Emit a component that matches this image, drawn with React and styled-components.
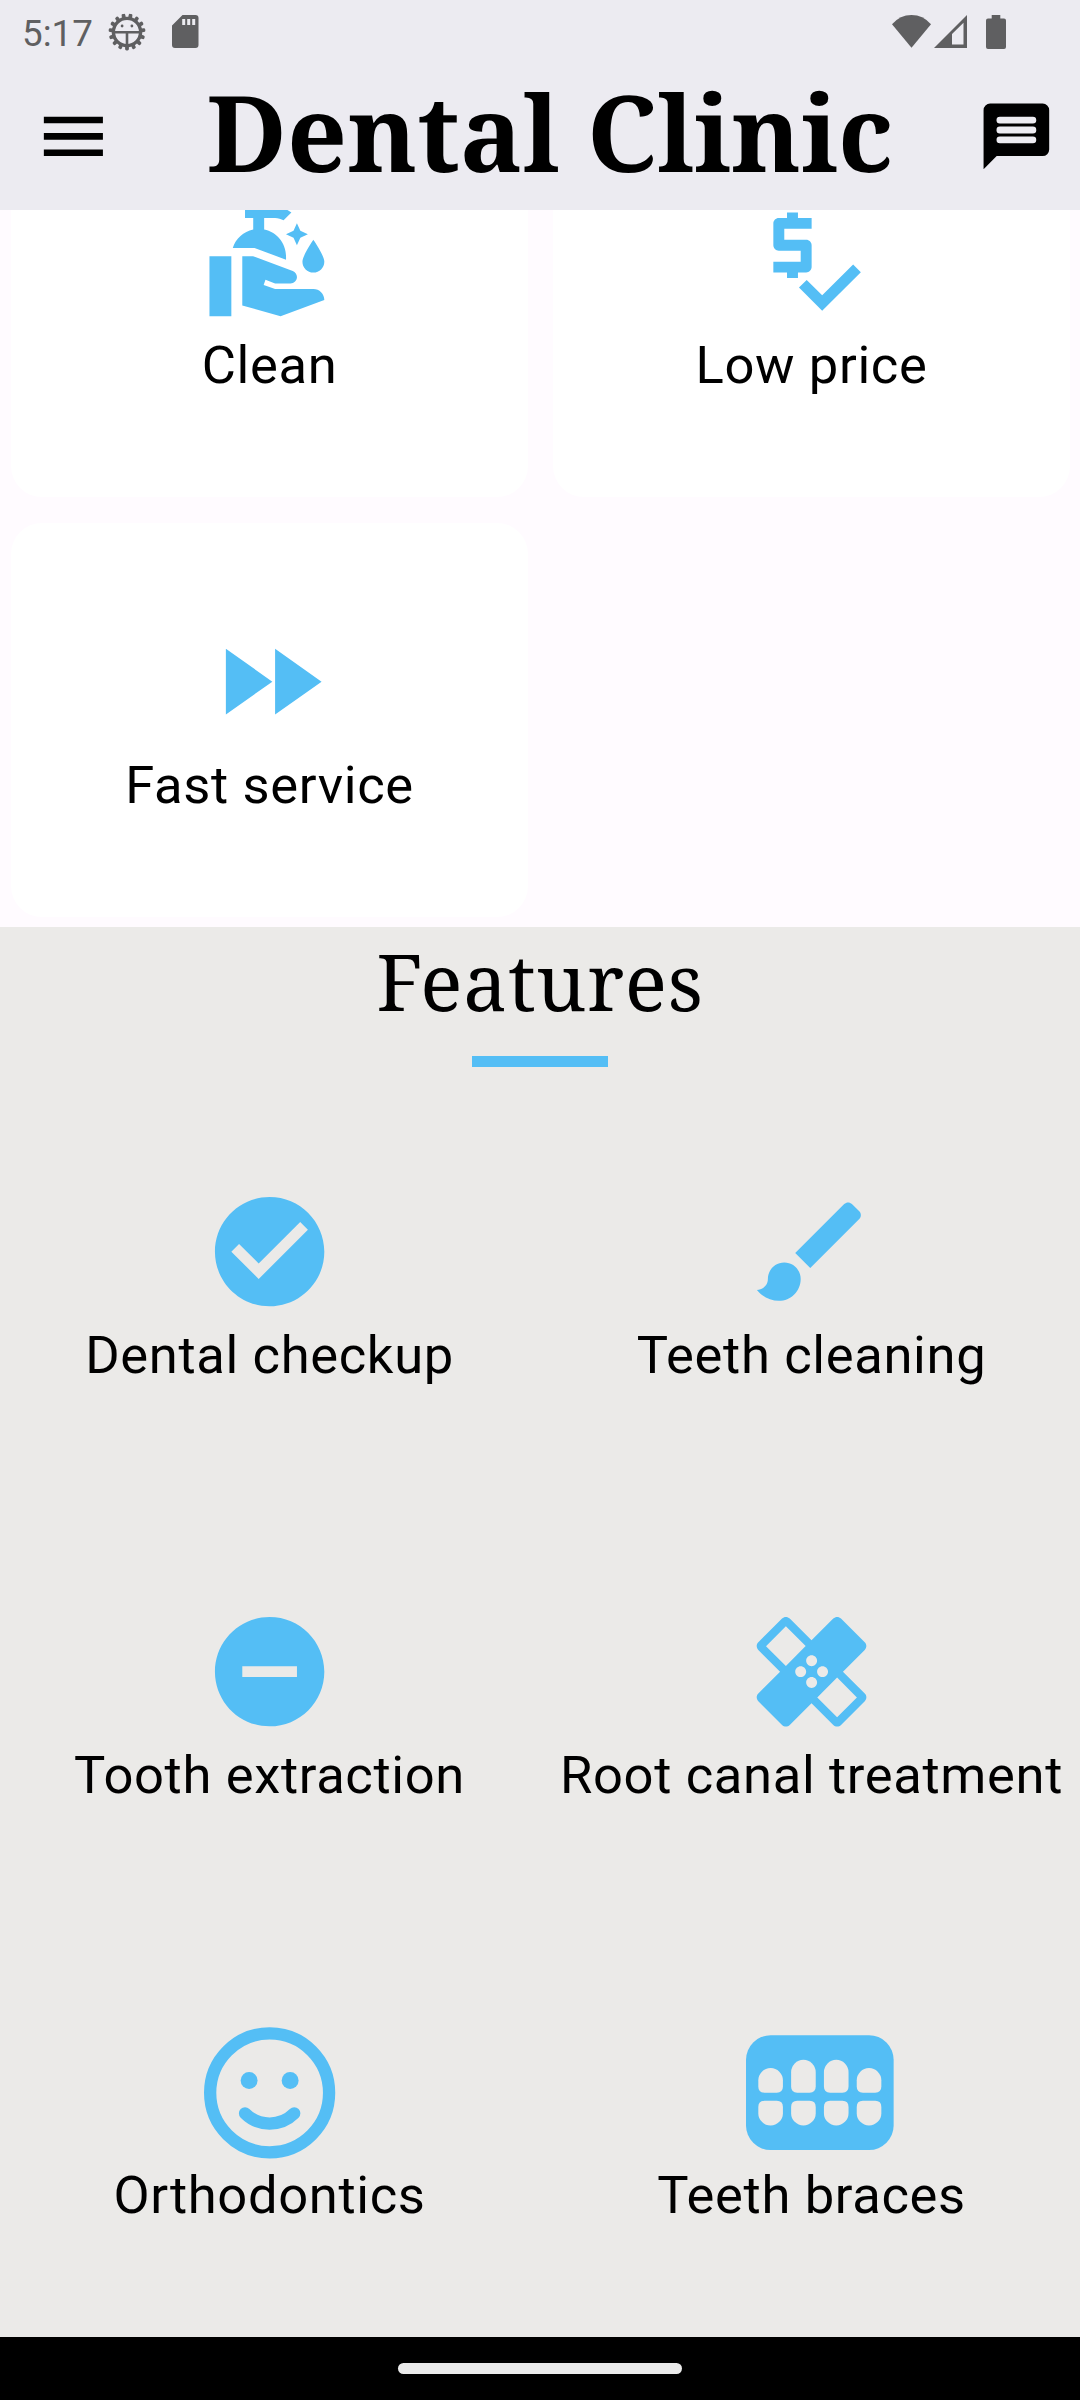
import React from "react";
import styled, { createGlobalStyle } from "styled-components";

const BLUE = "#54bef5";
const STATUS = "#5f5f61";

const GlobalStyle = createGlobalStyle`
  *, *::before, *::after { box-sizing: border-box; }
  body { margin: 0; background: #fffbff; font-family: Roboto, "Noto Sans", sans-serif; color: #000; }
  svg { display: block; flex: none; }
`;

const Screen = styled.div`
  display: flex;
  flex-direction: column;
  width: 1080px;
  height: 2400px;
  overflow: hidden;
  background: #fffbff;
`;

const Header = styled.header`
  flex: none;
  height: 210px;
  background: #ecebf1;
`;

const StatusBar = styled.div`
  display: flex;
  align-items: center;
  height: 63px;
  padding: 0 74px 0 22px;
  color: ${STATUS};
`;

const Clock = styled.span`
  width: 86px;
  font-size: 36.75px;
  line-height: 43px;
  margin-top: 3px;
`;

const StatusIcons = styled.div`
  display: flex;
  align-items: center;
  gap: ${(p) => p.$gap}px;
  margin-left: ${(p) => (p.$end ? "auto" : "0")};
`;

const AppBar = styled.div`
  display: flex;
  align-items: center;
  height: 147px;
  padding: 0 24px 0 34px;
`;

const Title = styled.h1`
  flex: 1;
  margin: 0;
  padding: 0 0 10px 10px;
  text-align: center;
  white-space: nowrap;
  font: 700 105px/137px "Noto Serif", "DejaVu Serif Condensed", "DejaVu Serif", serif;
`;

const Content = styled.main`
  flex: 1;
  min-height: 0;
  overflow: hidden;
`;

const Services = styled.section`
  margin-top: -107.25px;
  padding: 0 10.5px 10.5px;
`;

const Grid = styled.div`
  display: grid;
  grid-template-columns: 1fr 1fr;
  grid-auto-rows: 394px;
  gap: 26px 25px;
`;

const Tile = styled.div`
  display: flex;
  flex-direction: column;
  align-items: center;
  padding: 93px 0 0 1px;
  border-radius: 31px;
  background: ${(p) => (p.$card ? "#fff" : "transparent")};
`;

const IconBox = styled.div`
  display: flex;
  align-items: center;
  width: 131.25px;
  height: 131.25px;
  color: ${BLUE};
`;

const Label = styled.span`
  margin-top: 6.5px;
  font-size: 52.5px;
  line-height: 63px;
  letter-spacing: 0.656px;
  white-space: nowrap;
`;

const Features = styled.section`
  padding: 0 10.5px 40px;
  background: #ebeae8;
`;

const SectionHead = styled.div`
  display: flex;
  flex-direction: column;
  align-items: center;
  height: 165.5px;
`;

const SectionTitle = styled.h2`
  margin: 0;
  font: 400 78.75px/107px "Noto Serif", "DejaVu Serif Condensed", "DejaVu Serif", serif;
  letter-spacing: 0.656px;
`;

const Underline = styled.div`
  width: 135.5px;
  height: 10.5px;
  margin-top: 21.75px;
  background: ${BLUE};
`;

const NavBar = styled.footer`
  display: flex;
  flex: none;
  justify-content: center;
  align-items: center;
  height: 63px;
  background: #000;
`;

const Pill = styled.div`
  width: 284px;
  height: 11px;
  border-radius: 6px;
  background: #ebebeb;
`;

const Glyph = ({ d, size = 131.25 }) => (
  <svg width={size} height={size} viewBox="0 0 24 24" fill="currentColor">
    <path d={d} />
  </svg>
);

const PATHS = {
  menu: "M3 18h18v-2H3v2zm0-5h18v-2H3v2zm0-7v2h18V6H3z",
  clean:
    "M16.99 9l.63-1.37L18.99 7l-1.37-.63L16.99 5l-.62 1.37L14.99 7l1.38.63zM11 6.13V4h2c.57 0 1.1.17 1.55.45l1.43-1.43C15.15 2.39 14.13 2 13 2H7.5v2H9v2.14C7.23 6.51 5.81 7.8 5.26 9.5h3.98L15 11.65v-.62c0-2.42-1.72-4.44-4-4.9zM1 22h4V11H1v11zM20 17h-7l-2.09-.73.33-.94L13 16h2.82c.65 0 1.18-.53 1.18-1.18 0-.49-.31-.93-.77-1.11L8.97 11H7v9.02L14 22l8-3c-.01-1.1-.89-2-2-2zM20 14c1.1 0 2-.9 2-2s-2-4-2-4-2 2.9-2 4 .9 2 2 2z",
  price:
    "M12 13V9c0-.55-.45-1-1-1H7V6h5V4H9.5V3h-2v1H6c-.55 0-1 .45-1 1v4c0 .55.45 1 1 1h4v2H5v2h2.5v1h2v-1H11c.55 0 1-.45 1-1zM19.59 12.52l-5.66 5.65-2.83-2.83-1.41 1.41L13.93 21 21 13.93z",
  fast: "M4 18l8.5-6L4 6v12zm9-12v12l8.5-6L13 6z",
  check:
    "M12 2C6.48 2 2 6.48 2 12s4.48 10 10 10 10-4.48 10-10S17.52 2 12 2zm-2 15l-5-5 1.41-1.41L10 14.17l7.59-7.59L19 8l-9 9z",
  brush:
    "M7 14c-1.66 0-3 1.34-3 3 0 1.31-1.16 2-2 2 .92 1.22 2.49 2 4 2 2.21 0 4-1.79 4-4 0-1.66-1.34-3-3-3zm13.71-9.37l-1.34-1.34c-.39-.39-1.02-.39-1.41 0L9 12.25 11.75 15l8.96-8.96c.39-.39.39-1.02 0-1.41z",
  remove:
    "M12 2C6.48 2 2 6.48 2 12s4.48 10 10 10 10-4.48 10-10S17.52 2 12 2zm5 11H7v-2h10v2z",
  healing:
    "M17.73 12.02l3.98-3.98c.39-.39.39-1.02 0-1.41l-4.34-4.34c-.39-.39-1.02-.39-1.41 0l-3.98 3.98L8 2.29C7.8 2.1 7.55 2 7.29 2c-.25 0-.51.1-.7.29L2.25 6.63c-.39.39-.39 1.02 0 1.41l3.98 3.98L2.25 16c-.39.39-.39 1.02 0 1.41l4.34 4.34c.39.39 1.02.39 1.41 0l3.98-3.98 3.98 3.98c.2.2.45.29.71.29.26 0 .51-.1.71-.29l4.34-4.34c.39-.39.39-1.02 0-1.41l-3.99-3.98zM12 9c.55 0 1 .45 1 1s-.45 1-1 1-1-.45-1-1 .45-1 1-1zm-4.71 1.96L3.66 7.34l3.63-3.63 3.62 3.62-3.62 3.63zM10 13c-.55 0-1-.45-1-1s.45-1 1-1 1 .45 1 1-.45 1-1 1zm2 2c-.55 0-1-.45-1-1s.45-1 1-1 1 .45 1 1-.45 1-1 1zm2-4c.55 0 1 .45 1 1s-.45 1-1 1-1-.45-1-1 .45-1 1-1zm2.66 9.34l-3.63-3.62 3.63-3.63 3.62 3.62-3.62 3.63z",
};

const ChatIcon = () => (
  <svg width="78.75" height="78.75" viewBox="0 0 24 24">
    <path d="M4 2h16a2 2 0 0 1 2 2v12a2 2 0 0 1-2 2H6l-4 4V4a2 2 0 0 1 2-2z" />
    <g fill="#ecebf1">
      <rect x="5.95" y="6" width="12.1" height="2.1" rx="1" />
      <rect x="5.95" y="9" width="12.1" height="2.1" rx="1" />
      <rect x="5.95" y="12" width="12.1" height="2.1" rx="1" />
    </g>
  </svg>
);

const SmileIcon = () => (
  <svg width="131.25" height="131.25" viewBox="0 -0.15 16 16" overflow="visible" fill="none" stroke="currentColor" strokeWidth="1.5" strokeLinecap="round">
    <circle cx="8" cy="8" r="7.25" />
    <path d="M5 10.5a4.25 4.25 0 0 0 6 0" />
    <g fill="currentColor" stroke="none">
      <circle cx="5.5" cy="6.5" r="1.03" />
      <circle cx="10.5" cy="6.5" r="1.03" />
    </g>
  </svg>
);

const UPPER = [[1.5, 4], [5.5, 3], [9.5, 3], [13.5, 4]];

const TeethIcon = () => (
  <svg width="147.66" height="114.84" viewBox="0 -0.15 18 14" overflow="visible" fill="currentColor">
    <rect width="18" height="14" rx="3" />
    <g fill="#ebeae8">
      {UPPER.map(([x, y]) => (
        <React.Fragment key={x}>
          <path d={`M${x} ${y + 1.5}a1.5 1.5 0 0 1 3 0V6.25q0 .75-.75.75h-1.5q-.75 0-.75-.75z`} />
          <path d={`M${x} 8.75q0-.75.75-.75h1.5q.75 0 .75.75v.75a1.5 1.5 0 0 1-3 0z`} />
        </React.Fragment>
      ))}
    </g>
  </svg>
);

const GEAR_TEETH = Array.from({ length: 15 }, (_, i) => 180 + i * 24);

const DebugIcon = () => (
  <svg width="38" height="38" viewBox="-19 -19 38 38" fill="none" stroke="currentColor">
    <circle r="13.6" strokeWidth="3.4" />
    {GEAR_TEETH.map((a) => (
      <rect key={a} x="-1.9" y="-18.4" width="3.8" height="5" rx="1.4" transform={`rotate(${a})`} fill="currentColor" stroke="none" />
    ))}
    <path d="M-13 .2H13M0 .2V13" strokeWidth="2.6" />
    <g fill="currentColor" stroke="none">
      <circle cx="-4.9" cy="-6" r="1.4" />
      <circle cx="4.9" cy="-6" r="1.4" />
    </g>
  </svg>
);

const SdIcon = () => (
  <svg width="27" height="33" viewBox="0 0 27 33" fill="currentColor">
    <path fillRule="evenodd" d="M10.5 0H23.5a3 3 0 0 1 3 3V30a3 3 0 0 1-3 3H3a3 3 0 0 1-3-3V10.5zM10.2 4v6h3V4zM15.2 4v6h3V4zM20.2 4v6h3V4z" />
  </svg>
);

const WifiIcon = () => (
  <svg width="39" height="33" viewBox="0 0 39 33" fill="currentColor">
    <path d="M19.5 32.8L0 9.3Q8 0 19.5 0T39 9.3z" />
  </svg>
);

const SignalIcon = () => (
  <svg width="33" height="33" viewBox="0 0 33 33" fill="currentColor">
    <path fillRule="evenodd" d="M0 33L33 0V33zM18 19V29.5H29.5V7.8z" />
  </svg>
);

const BatteryIcon = () => (
  <svg width="20" height="34" viewBox="0 0 20 34" fill="currentColor">
    <path d="M5.7 0h8.6v3.5H18a2 2 0 0 1 2 2V32a2 2 0 0 1-2 2H2a2 2 0 0 1-2-2V5.5a2 2 0 0 1 2-2h3.7z" />
  </svg>
);

const SERVICES = [
  { label: "Clean", icon: <Glyph d={PATHS.clean} /> },
  { label: "Low price", icon: <Glyph d={PATHS.price} /> },
  { label: "Fast service", icon: <Glyph d={PATHS.fast} /> },
];

const FEATURES = [
  { label: "Dental checkup", icon: <Glyph d={PATHS.check} /> },
  { label: "Teeth cleaning", icon: <Glyph d={PATHS.brush} /> },
  { label: "Tooth extraction", icon: <Glyph d={PATHS.remove} /> },
  { label: "Root canal treatment", icon: <Glyph d={PATHS.healing} /> },
  { label: "Orthodontics", icon: <SmileIcon /> },
  { label: "Teeth braces", icon: <TeethIcon /> },
];

const TileGrid = ({ items, card }) => (
  <Grid>
    {items.map((item) => (
      <Tile key={item.label} $card={card}>
        <IconBox>{item.icon}</IconBox>
        <Label>{item.label}</Label>
      </Tile>
    ))}
  </Grid>
);

export default function App() {
  return (
    <Screen>
      <GlobalStyle />
      <Header>
        <StatusBar>
          <Clock>5:17</Clock>
          <StatusIcons $gap={26}>
            <DebugIcon />
            <SdIcon />
          </StatusIcons>
          <StatusIcons $gap={19} $end>
            <StatusIcons $gap={3}>
              <WifiIcon />
              <SignalIcon />
            </StatusIcons>
            <BatteryIcon />
          </StatusIcons>
        </StatusBar>
        <AppBar>
          <Glyph d={PATHS.menu} size={78.75} />
          <Title>Dental Clinic</Title>
          <ChatIcon />
        </AppBar>
      </Header>
      <Content>
        <Services>
          <TileGrid items={SERVICES} card />
        </Services>
        <Features>
          <SectionHead>
            <SectionTitle>Features</SectionTitle>
            <Underline />
          </SectionHead>
          <TileGrid items={FEATURES} />
        </Features>
      </Content>
      <NavBar>
        <Pill />
      </NavBar>
    </Screen>
  );
}
